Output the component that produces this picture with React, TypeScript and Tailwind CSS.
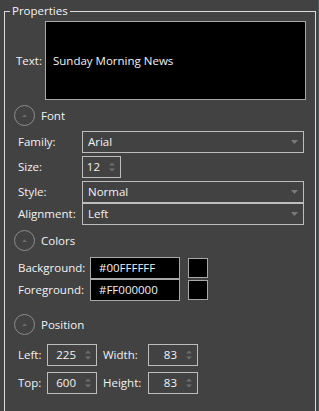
import React from 'react';

const FONT = { fontFamily: '"Open Sans", "Noto Sans", sans-serif' };

// small circle button with an up-pointing caret, used as section expander
const Expander: React.FC<{ label: string }> = ({ label }) => (
  <div className="flex items-center h-[21px] pl-[9px] gap-[6px]">
    <svg width="21" height="21" viewBox="0 0 21 21" className="shrink-0">
      <circle cx="10.5" cy="10.5" r="10" fill="none" stroke="#8e8e8e" strokeWidth="1" />
      <path d="M8 12 L10.5 9.5 L13 12 Z" fill="#6c6c6c" />
    </svg>
    <span className="text-[#f2f2f2]">{label}</span>
  </div>
);

const Combo: React.FC<{ value: string }> = ({ value }) => (
  <div className="flex items-center w-[222px] h-[22px] border border-[#bdbdbd] pl-[5px] pr-[5px]">
    <span className="flex-1 text-[#f2f2f2]">{value}</span>
    <svg width="7" height="4" viewBox="0 0 7 4">
      <path d="M0 0 H7 L3.5 4 Z" fill="#7a7a7a" />
    </svg>
  </div>
);

const Spin: React.FC<{ value: string; w: string }> = ({ value, w }) => (
  <div className={`flex items-center h-[22px] border border-[#bdbdbd] pr-[5px] ${w}`}>
    <span className="flex-1 text-right text-[#f2f2f2] pr-[9px]">{value}</span>
    <svg width="6" height="10" viewBox="0 0 6 10">
      <path d="M0 3.5 L3 0.5 L6 3.5 Z" fill="#6e6e6e" />
      <path d="M0 6.5 L3 9.5 L6 6.5 Z" fill="#6e6e6e" />
    </svg>
  </div>
);

const ColorRow: React.FC<{ label: string; value: string; swatch: string }> = ({ label, value, swatch }) => (
  <div className="flex items-center h-[22px] pl-[13px]">
    <span className="w-[72px] text-[#f2f2f2]">{label}</span>
    <div className="flex items-center w-[90px] h-[22px] bg-black border border-[#a8a8a8] pl-[8px] text-[#f2f2f2]">
      {value}
    </div>
    <div className={`ml-[8px] w-[20px] h-[20px] border border-[#a8a8a8] ${swatch}`} />
  </div>
);

export default function App() {
  return (
    <div className="w-[319px] h-[411px] bg-[#424242] flex overflow-hidden text-[11.5px] leading-[16px]" style={FONT}>
      <fieldset className="ml-[4px] mt-[3px] w-[312px] h-[420px] border border-[#dcdcdc] shrink-0">
        <legend className="ml-[5px] px-[2px] text-[11.5px] text-[#f2f2f2] leading-[16px]">Properties</legend>

        <div className="flex items-center mt-[2px] pl-[11px]">
          <span className="w-[29px] text-[#f2f2f2]">Text:</span>
          <div className="flex items-center w-[261px] h-[79px] bg-black border border-[#a8a8a8] pl-[7px] text-[#f2f2f2]">
            Sunday Morning News
          </div>
        </div>

        <div className="mt-[5px]">
          <Expander label="Font" />
        </div>
        <div className="mt-[5px] flex flex-col">
          <div className="flex items-center pl-[13px]">
            <span className="w-[64px] text-[#f2f2f2]">Family:</span>
            <Combo value="Arial" />
          </div>
          <div className="flex items-center pl-[13px] mt-[3px]">
            <span className="w-[64px] text-[#f2f2f2]">Size:</span>
            <Spin value="12" w="w-[39px]" />
          </div>
          <div className="flex items-center pl-[13px] mt-[3px]">
            <span className="w-[64px] text-[#f2f2f2]">Style:</span>
            <Combo value="Normal" />
          </div>
          <div className="flex items-center pl-[13px]">
            <span className="w-[64px] text-[#f2f2f2]">Alignment:</span>
            <Combo value="Left" />
          </div>
        </div>

        <div className="mt-[5px]">
          <Expander label="Colors" />
        </div>
        <div className="mt-[6px]">
          <ColorRow label="Background:" value="#00FFFFFF" swatch="bg-black" />
          <ColorRow label="Foreground:" value="#FF000000" swatch="bg-black" />
        </div>

        <div className="mt-[13px]">
          <Expander label="Position" />
        </div>
        <div className="mt-[9px] flex flex-col gap-[6px]">
          <div className="flex items-center pl-[13px]">
            <span className="w-[29px] text-[#f2f2f2]">Left:</span>
            <Spin value="225" w="w-[50px]" />
            <span className="w-[51px] pl-[6px] text-[#f2f2f2]">Width:</span>
            <Spin value="83" w="w-[50px]" />
          </div>
          <div className="flex items-center pl-[13px]">
            <span className="w-[29px] text-[#f2f2f2]">Top:</span>
            <Spin value="600" w="w-[50px]" />
            <span className="w-[51px] pl-[6px] text-[#f2f2f2]">Height:</span>
            <Spin value="83" w="w-[50px]" />
          </div>
        </div>
      </fieldset>
      <div className="ml-[2px] w-[1px] h-full bg-[#4d5b60]" />
    </div>
  );
}
